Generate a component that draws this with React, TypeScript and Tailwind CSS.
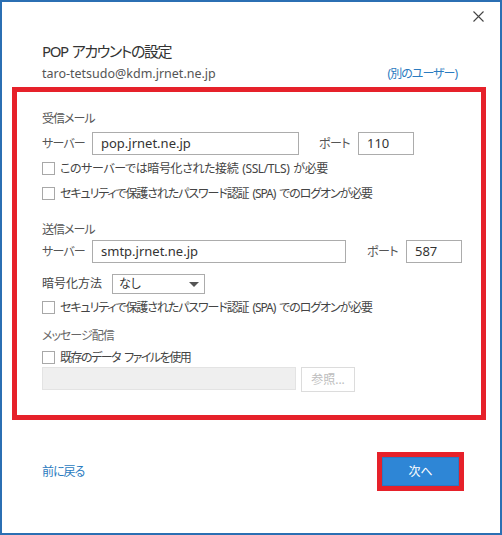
import { Fragment } from 'react'

// Outlook-style "POP account settings" dialog with red highlight frames.

const font = "font-['Segoe_UI','Noto_Sans','Noto_Sans_CJK_JP',sans-serif] [font-feature-settings:'palt']"

// keeps word gaps visible under the tight tracking
function Spaced({ text }: { text: string }) {
  const parts = text.split(' ')
  return (
    <>
      {parts.map((p, i) => (
        <Fragment key={i}>
          {i > 0 && <span className="inline-block w-[4px]" />}
          {p}
        </Fragment>
      ))}
    </>
  )
}

function Box() {
  return <span className="w-[13px] h-[13px] border border-[#a8a8a8] bg-white flex-shrink-0" />
}

function Checkbox({ label, track }: { label: string; track: string }) {
  return (
    <div className="flex items-center h-[25px]">
      <Box />
      <span className={`ml-[5px] text-[12px] leading-none text-[#444] whitespace-nowrap ${track}`}>
        <Spaced text={label} />
      </span>
    </div>
  )
}

function TextBox({ value, width }: { value: string; width: string }) {
  return (
    <div className={`${width} h-[23px] flex-shrink-0 border border-[#acacac] flex items-center px-[8px] text-[13px] text-[#333]`}>
      {value}
    </div>
  )
}

function ServerRow({ server, port, serverW, gap }: { server: string; port: string; serverW: string; gap: string }) {
  return (
    <div className="flex items-center h-[23px]">
      <span className="w-[50px] flex-shrink-0 whitespace-nowrap text-[12px] text-[#555] tracking-[-0.8px]">サーバー</span>
      <TextBox value={server} width={serverW} />
      <span className={`${gap} w-[39px] flex-shrink-0 whitespace-nowrap text-[12px] text-[#555] tracking-[-0.5px]`}>ポート</span>
      <TextBox value={port} width="w-[56px]" />
    </div>
  )
}

export default function App() {
  return (
    <div className={`w-[502px] h-[535px] border-2 border-[#2b6fb3] bg-white flex flex-col ${font}`}>
      <div className="flex justify-end pt-[9px] pr-[16px]">
        <svg width="11" height="11" viewBox="0 0 11 11" className="text-[#444]">
          <path d="M0.5 0.5L10.5 10.5M10.5 0.5L0.5 10.5" stroke="currentColor" strokeWidth="1.1" />
        </svg>
      </div>

      <h1 className="mt-[19px] ml-[40px] text-[15px] leading-[20px] text-[#333] tracking-[-1.4px]">
        <Spaced text="POP アカウントの設定" />
      </h1>
      <div className="mt-[4px] ml-[40px] mr-[43px] flex justify-between items-center h-[18px]">
        <span className="text-[12.5px] text-[#555]">taro-tetsudo@kdm.jrnet.ne.jp</span>
        <span className="text-[12px] text-[#2b7bc0] tracking-[-1px]">(別のユーザー)</span>
      </div>

      <div className="mt-[4px] ml-[10px] w-[474px] h-[333px] flex-shrink-0 border-[5px] border-[#e6212a] pl-[25px] flex flex-col">
        <div className="mt-[19px] h-[16px] text-[12px] leading-[16px] text-[#555] tracking-[-1px]">受信メール</div>
        <div className="mt-[5px]">
          <ServerRow server="pop.jrnet.ne.jp" port="110" serverW="w-[207px]" gap="ml-[20px]" />
        </div>
        <div className="mt-[1px]">
          <Checkbox label="このサーバーでは暗号化された接続 (SSL/TLS) が必要" track="tracking-[-0.4px]" />
          <Checkbox label="セキュリティで保護されたパスワード認証 (SPA) でのログオンが必要" track="tracking-[-1.1px]" />
        </div>

        <div className="mt-[16px] h-[16px] text-[12px] leading-[16px] text-[#555] tracking-[-1px]">送信メール</div>
        <div className="mt-[2px]">
          <ServerRow server="smtp.jrnet.ne.jp" port="587" serverW="w-[254px]" gap="ml-[21px]" />
        </div>
        <div className="mt-[11px] flex items-center h-[20px]">
          <span className="w-[70px] flex-shrink-0 text-[12px] text-[#444]">暗号化方法</span>
          <div className="w-[93px] h-[20px] border border-[#acacac] flex items-center justify-between pl-[6px] pr-[5px] text-[12px] text-[#333]">
            なし
            <span className="w-0 h-0 border-l-[5px] border-r-[5px] border-t-[5px] border-l-transparent border-r-transparent border-t-[#555]" />
          </div>
        </div>
        <div className="mt-[1px]">
          <Checkbox label="セキュリティで保護されたパスワード認証 (SPA) でのログオンが必要" track="tracking-[-1.1px]" />
        </div>

        <div className="mt-[8px] h-[16px] text-[12px] leading-[16px] text-[#666] tracking-[-1px]">メッセージ配信</div>
        <div className="h-[23px] pt-[4px] flex items-center">
          <Box />
          <span className="ml-[5px] text-[12px] leading-none text-[#444] tracking-[-1.5px]">
            <Spaced text="既存のデータ ファイルを使用" />
          </span>
        </div>
        <div className="flex items-start">
          <div className="w-[254px] h-[23px] bg-[#efefef] border border-[#e3e3e3]" />
          <div className="ml-[5px] w-[54px] h-[25px] border border-[#dcdcdc] flex items-center justify-center text-[12px] text-[#bdbdbd]">
            参照...
          </div>
        </div>
      </div>

      <div className="mt-[32px] ml-[40px] mr-[36px] flex justify-between items-center">
        <span className="text-[12px] text-[#2b7bc0] tracking-[-1px]">前に戻る</span>
        <div className="w-[87px] h-[39px] border-[5px] border-[#e6212a]">
          <div className="w-full h-full bg-[#2e86d6] border border-[#2a78c4] flex items-center justify-center text-[12px] text-white">
            次へ
          </div>
        </div>
      </div>
    </div>
  )
}
